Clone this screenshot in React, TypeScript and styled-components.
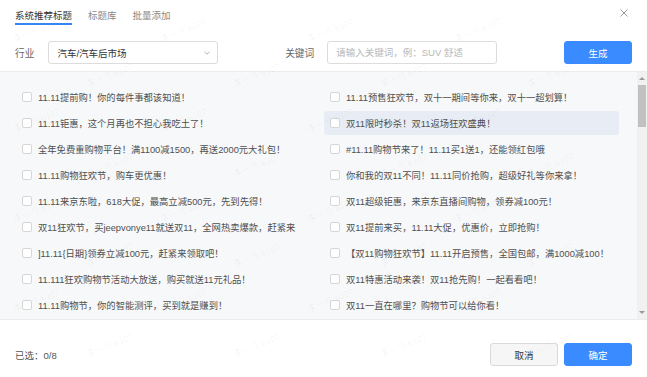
import * as React from "react";
import styled, { createGlobalStyle } from "styled-components";

const GlobalStyle = createGlobalStyle`
  html, body {
    margin: 0;
    padding: 0;
    background: #fff;
  }
  body {
    font-family: "Liberation Sans", "Noto Sans CJK SC", sans-serif;
  }
  * {
    box-sizing: border-box;
  }
`;

const Dialog = styled.div`
  position: relative;
  width: 647px;
  height: 377px;
  background: #fff;
  display: flex;
  flex-direction: column;
  overflow: hidden;
`;

const Header = styled.div`
  display: flex;
  align-items: flex-start;
  height: 25px;
  padding: 0 15px;
`;

const Tabs = styled.div`
  display: flex;
  gap: 16px;
  flex: 1;
`;

const Tab = styled.div<{ active?: boolean }>`
  padding-top: 9px;
  padding-bottom: 1px;
  line-height: 13px;
  font-size: 9.5px;
  color: ${(p) => (p.active ? "#333" : "#8a8a8a")};
  border-bottom: 2px solid ${(p) => (p.active ? "#3486f5" : "transparent")};
  cursor: pointer;
`;

const Close = styled.div`
  margin-top: 8px;
  margin-right: 4px;
  width: 9px;
  height: 9px;
  display: flex;
  align-items: center;
  justify-content: center;
`;

const FormRow = styled.div`
  display: flex;
  justify-content: space-between;
  align-items: center;
  margin-top: 16px;
  margin-bottom: 7px;
  padding: 0 15px;
  height: 23px;
`;

const Field = styled.div<{ gap: number }>`
  display: flex;
  align-items: center;
  gap: ${(p) => p.gap}px;
`;

const Label = styled.span`
  font-size: 9.7px;
  color: #666;
  white-space: nowrap;
`;

const Select = styled.div`
  width: 170px;
  height: 23px;
  border: 1px solid #dcdcdc;
  border-radius: 3px;
  display: flex;
  align-items: center;
  justify-content: space-between;
  padding: 0 7px 0 8px;
  font-size: 9.5px;
  color: #333;
  background: #fff;
`;

const Input = styled.input`
  width: 170px;
  height: 23px;
  border: 1px solid #dcdcdc;
  border-radius: 3px;
  padding: 0 8px;
  font-family: inherit;
  font-size: 9.5px;
  color: #333;
  outline: none;
  &::placeholder {
    color: #b8b8b8;
  }
`;

const Button = styled.button<{ primary?: boolean }>`
  width: 68px;
  height: 23px;
  border-radius: 3px;
  border: 1px solid ${(p) => (p.primary ? "#3a8bff" : "#dadada")};
  background: ${(p) => (p.primary ? "#3a8bff" : "#f6f6f6")};
  color: ${(p) => (p.primary ? "#fff" : "#333")};
  font-family: inherit;
  font-size: 9.5px;
  padding: 0;
  cursor: pointer;
`;

const ListArea = styled.div`
  display: flex;
  height: 250px;
  border-top: 1px solid #ececec;
  border-bottom: 1px solid #ececec;
  background: #f7f8f9;
`;

const Grid = styled.div`
  flex: 1;
  display: grid;
  grid-template-columns: 295px 295px;
  column-gap: 13px;
  row-gap: 2px;
  align-content: start;
  padding: 13px 18px 0 16px;
`;

const Row = styled.div<{ hover?: boolean }>`
  display: flex;
  align-items: center;
  gap: 6px;
  height: 24px;
  padding: 0 6px;
  border-radius: 3px;
  background: ${(p) => (p.hover ? "#e8edf5" : "transparent")};
  overflow: hidden;
`;

const Checkbox = styled.span`
  flex: none;
  width: 10px;
  height: 10px;
  border: 1px solid #d6d6d6;
  border-radius: 2px;
  background: #fff;
`;

const RowText = styled.span`
  font-size: 9.3px;
  color: #4f4f4f;
  white-space: nowrap;
`;

const ScrollTrack = styled.div`
  width: 10px;
  background: #f1f1f1;
  display: flex;
  flex-direction: column;
  align-items: center;
`;

const ArrowBox = styled.div`
  height: 13px;
  width: 100%;
  display: flex;
  align-items: center;
  justify-content: center;
`;

const Arrow = styled.span<{ down?: boolean }>`
  width: 0;
  height: 0;
  border-left: 3px solid transparent;
  border-right: 3px solid transparent;
  ${(p) =>
    p.down
      ? "border-top: 3px solid #9a9a9a;"
      : "border-bottom: 3px solid #9a9a9a;"}
`;

const Thumb = styled.div`
  width: 8px;
  height: 42px;
  background: #c1c1c1;
`;

const Spacer = styled.div`
  flex: 1;
`;

const Footer = styled.div`
  display: flex;
  align-items: center;
  justify-content: space-between;
  padding: 23px 15px 11px 15px;
`;

const Selected = styled.span`
  font-size: 9.5px;
  color: #555;
`;

const Actions = styled.div`
  display: flex;
  gap: 6px;
`;

const Watermark = styled.div`
  position: absolute;
  inset: 8px 0 0 0;
  pointer-events: none;
  display: flex;
  flex-direction: column;
`;

const MarkRow = styled.div<{ shift: number }>`
  display: flex;
  height: 45px;
  align-items: center;
  gap: 100px;
  padding-left: ${(p) => p.shift}px;
`;

const Mark = styled.span`
  flex: none;
  width: 47px;
  font-size: 9px;
  color: rgba(0, 0, 0, 0.05);
  white-space: nowrap;
  transform: rotate(-22deg);
`;

const LEFT = [
  "11.11提前购！你的每件事都该知道！",
  "11.11钜惠，这个月再也不担心我吃土了！",
  "全年免费重购物平台！满1100减1500，再送2000元大礼包！",
  "11.11购物狂欢节，购车更优惠！",
  "11.11来京东啦，618大促，最高立减500元，先到先得！",
  "双11狂欢节，买jeepvonye11就送双11，全网热卖爆款，赶紧来",
  "]11.11{日期}领券立减100元，赶紧来领取吧！",
  "11.111狂欢购物节活动大放送，购买就送11元礼品！",
  "11.11购物节，你的智能测评，买到就是赚到！",
];

const RIGHT = [
  "11.11预售狂欢节，双十一期间等你来，双十一超划算！",
  "双11限时秒杀！双11返场狂欢盛典！",
  "#11.11购物节来了！11.11买1送1，还能领红包哦",
  "你和我的双11不同！11.11同价抢购，超级好礼等你来拿！",
  "双11超级钜惠，来京东直播间购物，领券减100元！",
  "双11提前来买，11.11大促，优惠价，立即抢购！",
  "【双11购物狂欢节】11.11开启预售，全国包邮，满1000减100！",
  "双11特惠活动来袭！双11抢先购！一起看看吧！",
  "双11一直在哪里？购物节可以给你看！",
];

const App: React.FC = () => {
  const items: { text: string; hover: boolean }[] = [];
  LEFT.forEach((t, i) => {
    items.push({ text: t, hover: false });
    items.push({ text: RIGHT[i], hover: i === 1 });
  });

  return (
    <Dialog>
      <GlobalStyle />
      <Header>
        <Tabs>
          <Tab active>系统推荐标题</Tab>
          <Tab>标题库</Tab>
          <Tab>批量添加</Tab>
        </Tabs>
        <Close>
          <svg width="8" height="8" viewBox="0 0 8 8">
            <path d="M0.5 0.5L7.5 7.5M7.5 0.5L0.5 7.5" stroke="#999" strokeWidth="1" />
          </svg>
        </Close>
      </Header>
      <FormRow>
        <Field gap={14}>
          <Label>行业</Label>
          <Select>
            <span>汽车/汽车后市场</span>
            <svg width="6" height="4" viewBox="0 0 6 4">
              <path d="M0.5 0.8L3 3.2L5.5 0.8" stroke="#aaa" fill="none" strokeWidth="0.9" />
            </svg>
          </Select>
        </Field>
        <Field gap={13}>
          <Label>关键词</Label>
          <Input placeholder="请输入关键词，例：SUV 舒适" />
        </Field>
        <Button primary>生成</Button>
      </FormRow>
      <ListArea>
        <Grid>
          {items.map((it, i) => (
            <Row key={i} hover={it.hover}>
              <Checkbox />
              <RowText>{it.text}</RowText>
            </Row>
          ))}
        </Grid>
        <ScrollTrack>
          <ArrowBox>
            <Arrow />
          </ArrowBox>
          <Thumb />
          <Spacer />
          <ArrowBox>
            <Arrow down />
          </ArrowBox>
        </ScrollTrack>
      </ListArea>
      <Footer>
        <Selected>已选：0/8</Selected>
        <Actions>
          <Button>取消</Button>
          <Button primary>确定</Button>
        </Actions>
      </Footer>
      <Watermark>
        {Array.from({ length: 8 }).map((_, r) => (
          <MarkRow key={r} shift={r % 2 === 0 ? 12 : 85}>
            {Array.from({ length: r % 2 === 0 ? 4 : 4 }).map((__, c) => (
              <Mark key={c}>李一凡 6107</Mark>
            ))}
          </MarkRow>
        ))}
      </Watermark>
    </Dialog>
  );
};

export default App;
